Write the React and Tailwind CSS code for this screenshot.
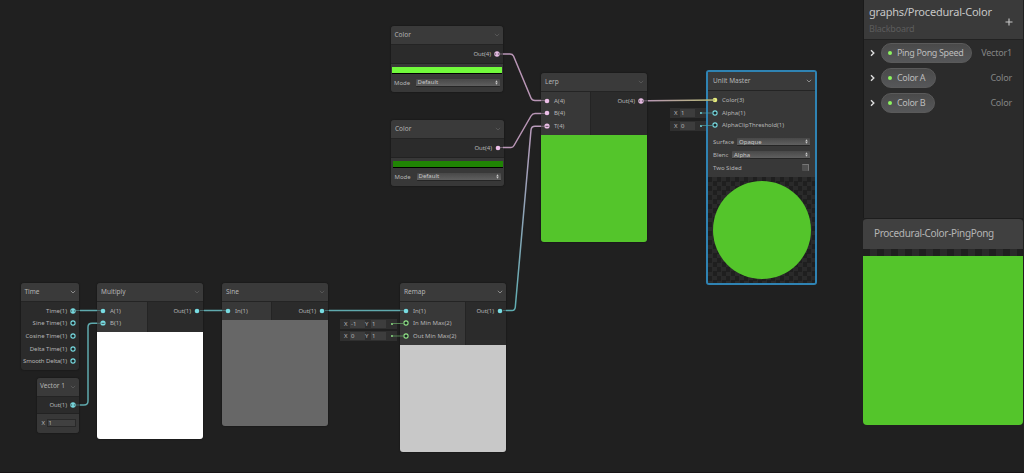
import React from "react";

const CHECKER =
  "bg-[conic-gradient(#2a2a2a_25%,#1f1f1f_0_50%,#2a2a2a_0_75%,#1f1f1f_0)]";

function Chevron({ bright }) {
  return (
    <svg width="6" height="4" viewBox="0 0 6 4" className="shrink-0">
      <path d="M0.8 0.8 L3 3 L5.2 0.8" fill="none" stroke={bright ? "#a0a0a0" : "#5c5c5c"} strokeWidth="0.8" />
    </svg>
  );
}

function Port({ color, kind = "full" }) {
  return (
    <svg width="6" height="6" viewBox="0 0 6 6" className="shrink-0">
      {kind === "full" && <circle cx="3" cy="3" r="2.3" fill={color} />}
      {kind === "open" && <circle cx="3" cy="3" r="2.1" fill="#1c2526" stroke={color} strokeWidth="1.1" />}
      {kind === "bar" && (
        <>
          <circle cx="3" cy="3" r="2.7" fill={color} />
          <path d="M1.7 1.8V4.2M4.3 1.8V4.2" stroke="#3a3a3a" strokeWidth="0.6" />
        </>
      )}
      {kind === "half" && (
        <>
          <circle cx="3" cy="3" r="2.6" fill={color} />
          <path d="M1.5 3.3H4.5" stroke="#333" strokeWidth="0.8" />
        </>
      )}
    </svg>
  );
}

function Node({ title, place, bright, frame = "shadow-[0_0_1.5px_#0c0c0c]", inset = "pl-[4px]", children }) {
  return (
    <section className={`absolute flex flex-col overflow-hidden rounded-[3px] bg-[#2b2b2b] ${frame} ${place}`}>
      <header className={`flex h-[19px] shrink-0 items-center justify-between border-b border-[#242424] bg-[#3a3a3a] pr-[3px] text-[6.5px] text-[#b4b4b4] ${inset}`}>
        <span>{title}</span>
        <Chevron bright={bright} />
      </header>
      {children}
    </section>
  );
}

function Input({ color, kind, children }) {
  return (
    <div className="flex h-[12.7px] items-center gap-[4px] pl-[3px]">
      <Port color={color} kind={kind} />
      <span>{children}</span>
    </div>
  );
}

function Output({ color, kind, children }) {
  return (
    <div className="flex h-[12.7px] items-center justify-end gap-[3px] pr-[3px]">
      <span>{children}</span>
      <Port color={color} kind={kind} />
    </div>
  );
}

function Select({ children, width }) {
  return (
    <div className={`flex h-[8px] items-center justify-between rounded-[1px] border-b border-[#252525] bg-linear-to-b from-[#484848] to-[#606060] pr-[2px] pl-[2px] text-[6px] text-[#c6c6c6] ${width}`}>
      <span className="leading-none">{children}</span>
      <svg width="3" height="5" viewBox="0 0 3 5">
        <path d="M1.5 0.3L2.7 2.2H0.3ZM1.5 4.7L2.7 2.8H0.3Z" fill="#c9c9c9" />
      </svg>
    </div>
  );
}

function ColorNode({ place, swatch, kind }) {
  return (
    <Node title="Color" place={place}>
      <div className="flex h-[18.5px] shrink-0 flex-col justify-center border-b border-[#222]">
        <Output color="#ecbfe8" kind={kind}>Out(4)</Output>
      </div>
      <div className="flex flex-1 flex-col bg-[#383838] px-[1.5px] pt-[3px]">
        <div className={`h-[7.5px] border-b border-black ${swatch}`} />
        <div className="mt-[4.5px] flex items-center justify-between pr-[2px] pl-[2px]">
          <span className="leading-none">Mode</span>
          <Select width="w-[84px]">Default</Select>
        </div>
      </div>
    </Node>
  );
}

function Ports({ height, left, inputs, output }) {
  return (
    <div className={`flex shrink-0 ${height}`}>
      <div className={`border-r border-[#242424] bg-[#383838] pt-[2.3px] ${left}`}>{inputs}</div>
      <div className="flex-1 pt-[2.3px]">{output}</div>
    </div>
  );
}

function Defaults({ place, color, values }) {
  return (
    <div className={`absolute flex h-[10px] items-center justify-between bg-[#2f2f2f] pr-[4px] pl-[4px] ${place}`}>
      <div className="flex">
        {values.map(([axis, value]) => (
          <span key={axis} className="flex h-[8px] items-center">
            <span className="w-[6px]">{axis}</span>
            <span className="flex h-[8px] w-[15px] items-center bg-[#3d3d3d] pl-px">{value}</span>
          </span>
        ))}
      </div>
      <span className={`size-[2.5px] rounded-full ${color}`} />
    </div>
  );
}

function Property({ name, type, pill }) {
  return (
    <div className="flex h-[25px] items-center">
      <svg width="5" height="8" viewBox="0 0 5 8">
        <path d="M1 1.2L3.8 4L1 6.8" fill="none" stroke="#dedede" strokeWidth="1.4" />
      </svg>
      <div className={`ml-[6px] flex h-[20px] items-center rounded-full border border-[#5a5a5a] bg-linear-to-b from-[#4a4a4a] to-[#565759] pl-[6px] text-[#bcbcbc] ${pill}`}>
        <span className="mr-[5px] size-[4px] rounded-full bg-[#8df560]" />
        <span className="text-[9px] tracking-[-0.35px] whitespace-nowrap">{name}</span>
      </div>
      <span className="ml-auto text-[9px] tracking-[-0.2px] text-[#858585]">{type}</span>
    </div>
  );
}

function Wires() {
  return (
    <svg width="1024" height="473" className="pointer-events-none absolute inset-0" fill="none" strokeWidth="1.5">
      <defs>
        <linearGradient id="blend" gradientUnits="userSpaceOnUse" x1="530" y1="126" x2="510" y2="310">
          <stop stopColor="#b99bbb" />
          <stop offset="1" stopColor="#5faeb2" />
        </linearGradient>
        <linearGradient id="toMaster" gradientUnits="userSpaceOnUse" x1="648" y1="0" x2="715" y2="0">
          <stop stopColor="#b797b3" />
          <stop offset="1" stopColor="#b6ba74" />
        </linearGradient>
      </defs>
      <g stroke="#b996b6">
        <path d="M503 54H510Q512.500 54 513.500 56L531 98Q532 100.500 535 100.500H541" />
        <path d="M503 147.500H511Q513 147.500 514 145.500L531 116Q532.500 113.500 535 113.500H541" />
      </g>
      <path d="M506 310.500H512Q515 310.500 515.300 307L531 130Q531.400 126.300 535 126.300H541" stroke="url(#blend)" />
      <path d="M648 100.800L715 100" stroke="url(#toMaster)" />
      <g stroke="#5fa9ad">
        <path d="M80 310.500H97" />
        <path d="M80 405H84Q88 405 88 401V327Q88 323.300 92 323.300H97" />
        <path d="M204 310.500H222" />
        <path d="M329 310.500H400" />
      </g>
      <g stroke="#a48aa2" strokeWidth="0.6">
        <path d="M500 54H503M500 147.500H503M541 100.500H545M541 113.500H545M541 126.300H545M643 100.800H648" />
      </g>
      <g stroke="#559699" strokeWidth="0.6">
        <path d="M76 310.500H80M76 405H80M97 310.500H101M97 323.300H101M200 310.500H204M222 310.500H226M325 310.500H329M400 310.500H404M503 310.500H506" />
      </g>
      <path d="M701 113H712M701 125.500H712" strokeWidth="0.7" stroke="#4f9fa6" />
      <path d="M392 323.500H403M392 336H403" strokeWidth="0.7" stroke="#6bac69" />
    </svg>
  );
}

const CYAN = "#78dce2";
const PINK = "#ecbfe8";
const LIME = "#92e587";

export default function App() {
  return (
    <main className="relative flex h-[473px] w-[1024px] overflow-hidden border-b border-[#171315] bg-[#202020] font-['Noto_Sans','Open_Sans',sans-serif] text-[6px] leading-none whitespace-nowrap text-[#b5b5b5]">
      <div className="relative flex-1">
        <ColorNode place="left-[390.5px] top-[26px] h-[65.5px] w-[112.5px]" swatch="bg-[#72fa3c]" kind="bar" />
        <ColorNode place="left-[391px] top-[120px] h-[65.5px] w-[113px]" swatch="bg-[#208404]" kind="full" />

        <Node title="Lerp" place="left-[541px] top-[73px] h-[169px] w-[106px]">
          <Ports
            height="h-[43px]"
            left="w-[50px]"
            inputs={<>
              <Input color={PINK}>A(4)</Input>
              <Input color={PINK}>B(4)</Input>
              <Input color={PINK} kind="half">T(4)</Input>
            </>}
            output={<Output color={PINK} kind="bar">Out(4)</Output>}
          />
          <div className="flex-1 bg-[#54c52b]" />
        </Node>

        <Node title="Unlit Master" place="left-[706px] top-[70px] h-[215px] w-[111px]" frame="border-2 border-[#2f83b3]" inset="pl-[5px]" bright>
          <div className="flex flex-1 flex-col bg-[#383838] pt-[2.5px]">
            <div className="pl-px">
              <Input color="#e8ee7c">Color(3)</Input>
              <Input color={CYAN} kind="open">Alpha(1)</Input>
              <Input color={CYAN} kind="open">AlphaClipThreshold(1)</Input>
            </div>
            <div className="mt-[4.5px] flex h-[12.7px] items-center justify-between pr-[5px] pl-[5px]">
              Surface<Select width="w-[73px]">Opaque</Select>
            </div>
            <div className="flex h-[12.7px] items-center justify-between pr-[5px] pl-[5px]">
              Blenc<Select width="w-[78px]">Alpha</Select>
            </div>
            <div className="flex h-[12.7px] items-center justify-between pr-[6px] pl-[5px]">
              Two Sided
              <span className="size-[7px] rounded-[1px] border-t border-r border-[#777] bg-[#505050]" />
            </div>
          </div>
          <div className={`flex h-[106px] shrink-0 items-center justify-center bg-size-[9px_9px] ${CHECKER}`}>
            <div className="size-[98px] rounded-full bg-[#54c52b]" />
          </div>
        </Node>

        <Node title="Time" place="left-[20.5px] top-[283px] h-[87px] w-[58.5px]" bright>
          <div className="pt-[2.3px]">
            <Output color={CYAN} kind="bar">Time(1)</Output>
            <Output color={CYAN} kind="open">Sine Time(1)</Output>
            <Output color={CYAN} kind="open">Cosine Time(1)</Output>
            <Output color={CYAN} kind="open">Delta Time(1)</Output>
            <Output color={CYAN} kind="open"><span className="tracking-[-0.1px]">Smooth Delta(1)</span></Output>
          </div>
        </Node>

        <Node title="Vector 1" place="left-[36.5px] top-[377.5px] h-[55.500px] w-[42.500px]" inset="pl-[3.5px]">
          <div className="flex h-[17px] shrink-0 flex-col justify-center border-b border-[#222]">
            <Output color={CYAN} kind="bar">Out(1)</Output>
          </div>
          <div className="flex flex-1 items-center bg-[#383838] pl-[5px]">
            <span className="w-[5px]">X</span>
            <span className="flex h-[8px] w-[29px] items-center border border-[#292929] bg-[#404040] pl-px">1</span>
          </div>
        </Node>

        <Node title="Multiply" place="left-[97px] top-[283px] h-[156px] w-[106px]">
          <Ports
            height="h-[30px]"
            left="w-[51px]"
            inputs={<>
              <Input color={CYAN}>A(1)</Input>
              <Input color={CYAN} kind="half">B(1)</Input>
            </>}
            output={<Output color={CYAN}>Out(1)</Output>}
          />
          <div className="flex-1 bg-white" />
        </Node>

        <Node title="Sine" place="left-[222px] top-[283px] h-[143px] w-[106px]">
          <Ports
            height="h-[18px]"
            left="w-[50px]"
            inputs={<Input color={CYAN}>In(1)</Input>}
            output={<Output color={CYAN}>Out(1)</Output>}
          />
          <div className="flex-1 bg-[#676767]" />
        </Node>

        <Node title="Remap" place="left-[400px] top-[283px] h-[169px] w-[106px]" bright>
          <Ports
            height="h-[43px]"
            left="w-[65.5px]"
            inputs={<>
              <Input color={CYAN}>In(1)</Input>
              <Input color={LIME} kind="open">In Min Max(2)</Input>
              <Input color={LIME} kind="open">Out Min Max(2)</Input>
            </>}
            output={<Output color={CYAN}>Out(1)</Output>}
          />
          <div className="flex-1 bg-[#c8c8c8]" />
        </Node>

        <Defaults place="left-[670px] top-[108px] w-[36px]" color="bg-[#78dce2]" values={[["X", "1"]]} />
        <Defaults place="left-[670px] top-[121px] w-[36px]" color="bg-[#78dce2]" values={[["X", "0"]]} />
        <Defaults place="left-[340px] top-[319px] w-[57px]" color="bg-[#92e587]" values={[["X", "-1"], ["Y", "1"]]} />
        <Defaults place="left-[340px] top-[331px] w-[57px]" color="bg-[#92e587]" values={[["X", "0"], ["Y", "1"]]} />
        <Wires />
      </div>

      <aside className="flex w-[161px] shrink-0 flex-col pr-px">
        <section className="flex h-[218px] flex-col border-l border-[#1a1a1a] bg-[#2b2b2b]">
          <header className="flex h-[40px] items-center justify-between border-b border-[#222] bg-[#3a3a3a] pr-[10px] pl-[5px]">
            <div>
              <h1 className="text-[11px] leading-[13px] tracking-[-0.2px] text-[#c6c6c6]">graphs/Procedural-Color</h1>
              <p className="mt-[5px] text-[9px] leading-[11px] tracking-[-0.2px] text-[#5c5c5c]">Blackboard</p>
            </div>
            <svg width="8" height="8" viewBox="0 0 8 8" className="mt-[4px]">
              <path d="M4 0.500V7.500M0.500 4H7.500" stroke="#c8c8c8" strokeWidth="1.1" />
            </svg>
          </header>
          <div className="pr-[11px] pl-[6px]">
            <Property name="Ping Pong Speed" type="Vector1" pill="w-[91px]" />
            <Property name="Color A" type="Color" pill="w-[55px]" />
            <Property name="Color B" type="Color" pill="w-[54px]" />
          </div>
        </section>
        <section className="flex h-[207px] flex-col overflow-hidden rounded-[4px] border-t border-[#1d1d1d]">
          <header className="flex h-[30px] shrink-0 items-center bg-[#404040] pb-[2px] pl-[11px] text-[10px] tracking-[-0.32px] text-[#b4b4b4]">
            Procedural-Color-PingPong
          </header>
          <div className={`h-[7px] shrink-0 bg-size-[14px_14px] ${CHECKER}`} />
          <div className="flex-1 bg-[#54c52b]" />
        </section>
      </aside>
    </main>
  );
}
